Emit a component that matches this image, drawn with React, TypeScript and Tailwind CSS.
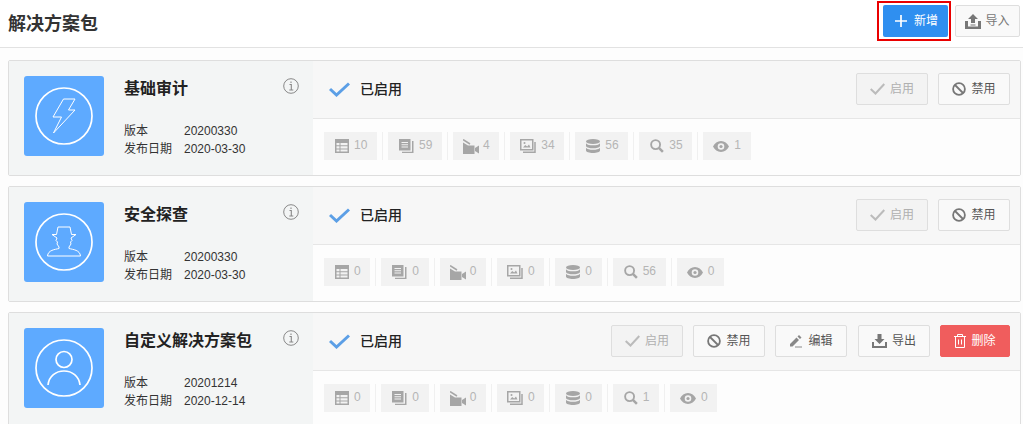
import type { ReactNode } from "react";

const FONT = "font-['Liberation_Sans','Noto_Sans_CJK_SC',sans-serif]";

function TableIcon() {
  return (
    <svg width="14" height="14" viewBox="0 0 14 14" fill="#a6a6a6">
      <path d="M0 0h14v14H0z" />
      <path d="M1.500 4h3v2.200h-3zM5.500 4h7v2.200h-7zM1.500 7.200h3v2.200h-3zM5.500 7.200h7v2.200h-7zM1.500 10.400h3v2.100h-3zM5.500 10.400h7v2.100h-7z" fill="#f2f2f2" />
    </svg>
  );
}

function DocsIcon() {
  return (
    <svg width="15" height="14" viewBox="0 0 15 14" fill="#a6a6a6">
      <path d="M0 0h11.500v11.500H0z" />
      <path d="M2.500 3h6.500v1H2.500zM2.500 5.200h6.500v1H2.500zM2.500 7.400h6.500v1H2.500z" fill="#f2f2f2" />
      <path d="M13 2h1.500v12H3v-1.300h10z" />
    </svg>
  );
}

function VideoIcon() {
  return (
    <svg className="-mx-px" width="16" height="15" viewBox="0 0 16 15" fill="#a6a6a6">
      <path d="M0 .5 7 5" stroke="#a6a6a6" strokeWidth="1.500" fill="none" />
      <path d="M0 3.500 5 6.500h6.500V15H0z" />
      <path d="m12 9 4-2.500v8L12 12z" />
    </svg>
  );
}

function ImageIcon() {
  return (
    <svg className="-ml-px" width="16" height="14" viewBox="0 0 16 14" fill="none" stroke="#a6a6a6">
      <path d="M.75.75h12v10h-12z" strokeWidth="1.500" />
      <path d="M15 3v10.250H3" strokeWidth="1.500" />
      <path d="m3 8.500 2.200-2.500 2 1.500L9 5.500l1.500 3z" fill="#a6a6a6" stroke="none" />
      <circle cx="4.500" cy="4" r="1" fill="#a6a6a6" stroke="none" />
    </svg>
  );
}

function DbIcon() {
  return (
    <svg width="14" height="14" viewBox="0 0 14 14" fill="#a6a6a6">
      <ellipse cx="7" cy="2.500" rx="7" ry="2.500" />
      <path d="M0 4.200c1 1.600 3.800 2.100 7 2.100s6-.5 7-2.100v3c-1 1.500-3.800 2-7 2s-6-.5-7-2z" />
      <path d="M0 8.700c1 1.500 3.800 2 7 2s6-.5 7-2v2.800C14 13 10.900 14 7 14s-7-1-7-2.500z" />
    </svg>
  );
}

function SearchIcon() {
  return (
    <svg width="14" height="14" viewBox="0 0 15 15" fill="none" stroke="#a6a6a6">
      <circle cx="6" cy="6" r="4.800" strokeWidth="2" />
      <path d="m9.500 9.500 4.300 4.300" strokeWidth="2.600" />
    </svg>
  );
}

function EyeIcon() {
  return (
    <svg className="-ml-px" width="16" height="11" viewBox="0 0 16 11" fill="#a6a6a6">
      <path fillRule="evenodd" d="M8 0c3.500 0 6.300 2.300 8 5.500C14.300 8.700 11.500 11 8 11S1.700 8.700 0 5.500C1.700 2.300 4.500 0 8 0Zm0 2.200a3.300 3.300 0 1 0 0 6.600 3.300 3.300 0 0 0 0-6.600Z" />
      <circle cx="8" cy="5.500" r="1.600" />
    </svg>
  );
}

const STAT_ICONS = [TableIcon, DocsIcon, VideoIcon, ImageIcon, DbIcon, SearchIcon, EyeIcon];

function BoltLogo() {
  return <path d="M39.500 23H51L44.500 34H51L29.500 57L37.500 41H29Z" fill="none" stroke="#fff" strokeWidth="1" />;
}

function SpyLogo() {
  return (
    <path
      d="M34 25H46L47.500 32.500H52L47 36L48 38.500L46.500 40L47 42L45 45V46.500C49 47.500 56 48 56.500 54H23.500C24 48 31 47.500 35 46.500V45L33 42L33.500 40L32 38.500L33 36L28 32.500H32.500Z"
      fill="none"
      stroke="#fff"
      strokeWidth="1"
    />
  );
}

function UserLogo() {
  return (
    <>
      <circle cx="40" cy="31.500" r="8" fill="none" stroke="#fff" strokeWidth="1.700" />
      <path d="M24 57c1-9 8-14 16-14s15 5 16 14" fill="none" stroke="#fff" strokeWidth="1.700" />
    </>
  );
}

function Logo({ children }: { children: ReactNode }) {
  return (
    <div className="h-20 w-20 shrink-0 rounded-[3px] bg-[#5eaaff]">
      <svg width="80" height="80" viewBox="0 0 80 80">
        <circle cx="40" cy="40" r="28" fill="none" stroke="#fff" strokeWidth="1.700" />
        {children}
      </svg>
    </div>
  );
}

function InfoIcon() {
  return (
    <svg className="mt-[2px]" width="16" height="16" viewBox="0 0 16 16" fill="none" stroke="#888">
      <circle cx="8" cy="8" r="7.300" />
      <path d="M6.500 6.500H8.300V12M6.300 12h4M8 3.500v1.500" strokeWidth="1.100" />
    </svg>
  );
}

function Btn({
  icon,
  label,
  width,
  disabled,
  danger,
}: {
  icon: ReactNode;
  label: string;
  width: string;
  disabled?: boolean;
  danger?: boolean;
}) {
  const tone = danger
    ? "border-[#f05d5d] bg-[#f05d5d] text-white"
    : disabled
      ? "border-[#dedede] bg-[#f3f3f3] text-[#b0b0b0]"
      : "border-[#dedede] bg-[#f9f9f9] text-[#555]";
  return (
    <button type="button" className={`flex h-8 items-center justify-center gap-[5px] rounded-[2px] border text-xs ${width} ${tone}`}>
      {icon}
      {label}
    </button>
  );
}

const CheckGlyph = (
  <svg width="15" height="12" viewBox="0 0 15 12" fill="none" stroke="#bbb" strokeWidth="2">
    <path d="m.7 6 4.800 4.500L14.300 1" />
  </svg>
);
const BanGlyph = (
  <svg width="14" height="14" viewBox="0 0 14 14" fill="none" stroke="#777" strokeWidth="1.800">
    <circle cx="7" cy="7" r="5.900" />
    <path d="m3 3 8 8" />
  </svg>
);
const EditGlyph = (
  <svg width="14" height="14" viewBox="0 0 14 14" fill="#888">
    <path d="m1 10 6.500-6.500 2.500 2.500L3.500 12.500H1zM8.500 2.500 10 1l2.500 2.500L11 5z" />
    <path d="M6 12.500h7v1H6z" />
  </svg>
);
const ExportGlyph = (
  <svg width="15" height="14" viewBox="0 0 15 14" fill="#777">
    <path d="M5.500 0h4v5h3l-5 5-5-5h3z" />
    <path d="M0 8h2v4h11V8h2v6H0z" />
  </svg>
);
const TrashGlyph = (
  <svg width="12" height="14" viewBox="0 0 12 14" fill="none" stroke="#fff">
    <path d="M0 2.500h12M3.500 2.500v-2h5v2M1.500 2.500v11h9v-11M4.500 5.500v5M7.500 5.500v5" />
  </svg>
);

type Pack = {
  name: string;
  logo: ReactNode;
  version: string;
  date: string;
  stats: number[];
  custom?: boolean;
};

const PACKS: Pack[] = [
  { name: "基础审计", logo: <BoltLogo />, version: "20200330", date: "2020-03-30", stats: [10, 59, 4, 34, 56, 35, 1] },
  { name: "安全探查", logo: <SpyLogo />, version: "20200330", date: "2020-03-30", stats: [0, 0, 0, 0, 0, 56, 0] },
  { name: "自定义解决方案包", logo: <UserLogo />, version: "20201214", date: "2020-12-14", stats: [0, 0, 0, 0, 0, 1, 0], custom: true },
];

function PackCard({ pack }: { pack: Pack }) {
  return (
    <div className="flex h-[116px] shrink-0 rounded-[2px] border border-[#dedede]">
      <div className="flex w-[304px] shrink-0 gap-5 bg-[#f3f5f5] py-[15px] pr-[14px] pl-[15px]">
        <Logo>{pack.logo}</Logo>
        <div className="min-w-0 flex-1">
          <div className="flex h-6 items-start justify-between">
            <div className="text-base leading-[25px] font-bold text-[#222]">{pack.name}</div>
            <InfoIcon />
          </div>
          <div className="mt-[22px] grid grid-cols-[60px_1fr] text-xs leading-[18px] text-[#333]">
            <span>版本</span>
            <span>{pack.version}</span>
            <span>发布日期</span>
            <span>{pack.date}</span>
          </div>
        </div>
      </div>
      <div className="flex min-w-0 flex-1 flex-col bg-[#fdfdfd]">
        <div className="flex h-[58px] shrink-0 items-center border-b border-[#e6e6e6] bg-[#f7f7f7] pr-[10px] pl-[16px]">
          <svg width="21" height="15" viewBox="0 0 21 15" fill="none" stroke="#5c9fe6" strokeWidth="3">
            <path d="m1 7 6.500 6L20 1.500" />
          </svg>
          <span className="ml-[10px] pb-[2px] text-sm font-medium text-[#222]">已启用</span>
          <div className="mb-[2px] ml-auto flex gap-[10px]">
            <Btn icon={CheckGlyph} label="启用" width="w-[72px]" disabled />
            <Btn icon={BanGlyph} label="禁用" width="w-[72px]" />
            {pack.custom && (
              <>
                <Btn icon={EditGlyph} label="编辑" width="w-[72px]" />
                <div className="ml-px">
                  <Btn icon={ExportGlyph} label="导出" width="w-[72px]" />
                </div>
                <Btn icon={TrashGlyph} label="删除" width="w-[70px]" danger />
              </>
            )}
          </div>
        </div>
        <div className="flex items-center pt-[13px] pl-[11px]">
          {pack.stats.map((value, i) => {
            const Icon = STAT_ICONS[i];
            return (
              <div key={i} className="flex items-center">
                {i > 0 && <div className="mx-[5px] h-7 w-px bg-[#f0f0f0]" />}
                <div className="flex h-7 items-center gap-[5px] bg-[#f2f2f2] pr-[9.650px] pl-[11px] text-xs text-[#b5b5b5]">
                  <Icon />
                  <span className="pb-[2px]">{value}</span>
                </div>
              </div>
            );
          })}
        </div>
      </div>
    </div>
  );
}

export default function App() {
  return (
    <div className={`h-[424px] overflow-hidden bg-[#fdfdfd] ${FONT}`}>
      <div className="flex h-12 items-center justify-between border-b border-[#e2e2e2] bg-white pr-[3px] pl-2">
        <h1 className="text-lg font-bold text-[#333]">解决方案包</h1>
        <div className="flex items-center gap-[7px] pb-[5px]">
          <div className="relative">
            <button type="button" className="flex h-8 w-[65px] items-center gap-[7px] rounded-[2px] bg-[#2f8ff0] pl-3 text-xs text-white">
              <svg width="12" height="12" viewBox="0 0 12 12" stroke="#fff" strokeWidth="1.700">
                <path d="M6 0v12M0 6h12" />
              </svg>
              新增
            </button>
            <div className="pointer-events-none absolute -top-1 -right-[3px] -bottom-1 -left-[6px] border-2 border-[#ea0000]" />
          </div>
          <button type="button" className="flex h-8 w-[65px] items-center justify-center gap-1 rounded-[2px] border border-[#dedede] bg-[#f9f9f9] text-xs text-[#777]">
            <svg width="16" height="15" viewBox="0 0 16 15" fill="#777">
              <path d="M8 0l5 5h-3v4H6V5H3z" />
              <path d="M5.500 10.500h5v1h-5z" />
              <path d="M0 7h3v5.500h10V7h3v8H0z" />
            </svg>
            导入
          </button>
        </div>
      </div>
      <div className="flex flex-col gap-[10px] pt-3 pr-[2px] pl-2">
        {PACKS.map((pack) => (
          <PackCard key={pack.name} pack={pack} />
        ))}
      </div>
    </div>
  );
}
